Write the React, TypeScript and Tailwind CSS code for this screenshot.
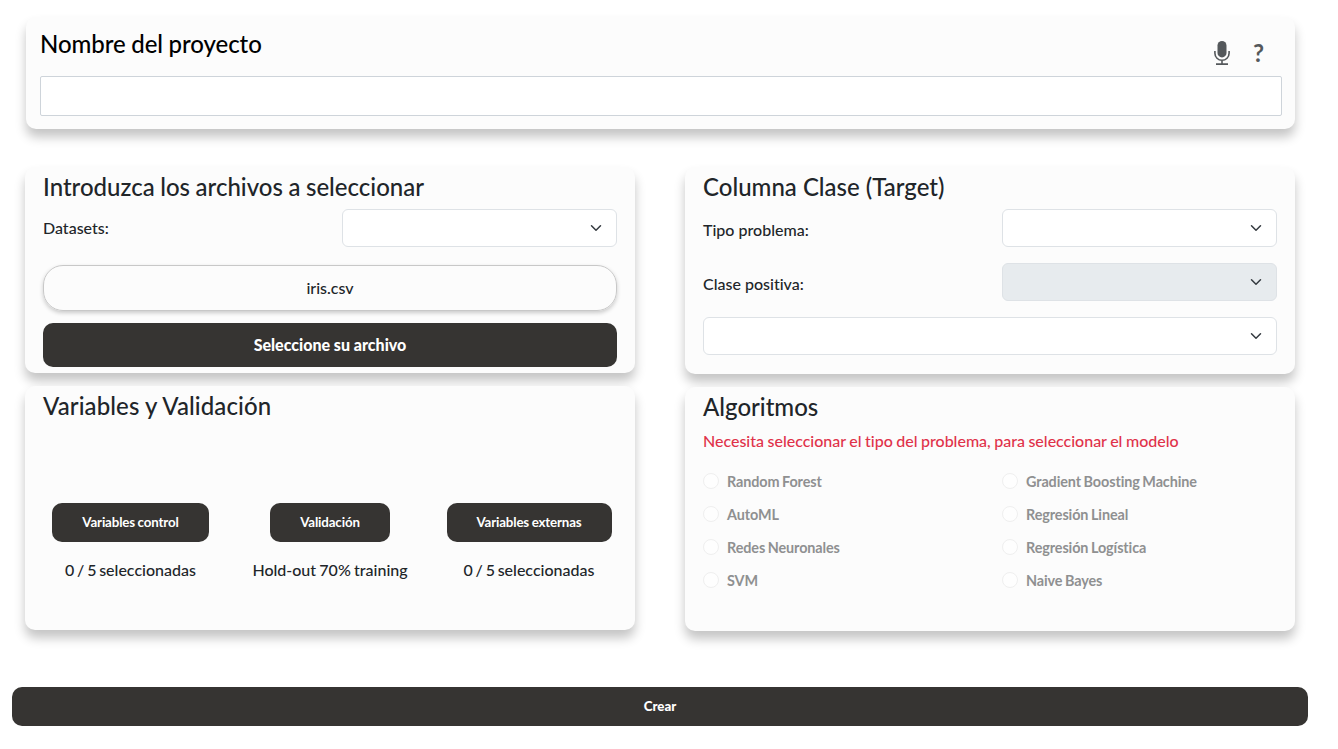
import React from "react";

const cardClass =
  "rounded-[10px] bg-[#fcfcfc] shadow-[0_8px_11px_rgba(0,0,0,0.23)]";
const titleClass = "text-[24px] leading-[29px] font-medium";
const darkButton =
  "flex items-center justify-center rounded-[10px] bg-[#363432] text-white";

function Select({ className = "", disabled = false }: { className?: string; disabled?: boolean }) {
  return (
    <button
      type="button"
      disabled={disabled}
      className={`flex h-[38px] items-center justify-end rounded-md border border-[#dee2e6] pr-3 ${
        disabled ? "bg-[#e7ebee]" : "bg-white"
      } ${className}`}
    >
      <svg width="16" height="12" viewBox="0 0 16 16" className="block" fill="none">
        <path
          d="m2 5 6 6 6-6"
          stroke="#343a40"
          strokeWidth="2"
          strokeLinecap="round"
          strokeLinejoin="round"
        />
      </svg>
    </button>
  );
}

function MicIcon() {
  return (
    <svg width="16" height="24" viewBox="0 0 16 24" className="block">
      <rect x="3.5" y="0" width="9" height="16.4" rx="4.5" fill="#54585b" />
      <path
        d="M.9 10v2.2a7.1 7.1 0 0 0 14.2 0V10M8 19.3v3.9M2 23.1h12"
        fill="none"
        stroke="#54585b"
        strokeWidth="1.6"
      />
    </svg>
  );
}

function Variable({ label, detail, className, labelClass, detailClass }: { label: string; detail: string; className: string; labelClass: string; detailClass: string }) {
  return (
    <div className={`flex flex-col items-center ${className}`}>
      <button type="button" className={`${darkButton} h-[39px] text-[13.33px] font-bold tracking-[-0.15px] [word-spacing:-0.5px] ${labelClass}`}>
        {label}
      </button>
      <p className={`mt-4 text-[16px] leading-6 whitespace-nowrap ${detailClass}`}>{detail}</p>
    </div>
  );
}

function Algorithm({ name }: { name: string }) {
  return (
    <label className="flex h-[33px] items-center">
      <span className="mb-px size-4 rounded-full border border-[#efefef] bg-[#fefefe]" />
      <span className="ml-2 text-[14.4px] leading-6 font-bold tracking-[-0.1px] text-[#8f9091] [word-spacing:-0.8px]">{name}</span>
    </label>
  );
}

export default function App() {
  return (
    <main className="flex h-[749px] w-[1338px] flex-col bg-white font-[Lato,sans-serif] font-medium text-[#212529] [font-variant-ligatures:none]">
      <section className={`${cardClass} mt-[17px] ml-[26px] h-[112px] w-[1269px] px-[14px] pt-[12px]`}>
        <div className="flex h-[47px] justify-between">
          <h1 className={`${titleClass} tracking-[-0.04px] text-black [word-spacing:-0.6px]`}>Nombre del proyecto</h1>
          <div className="mt-3 mr-[17px] flex">
            <MicIcon />
            <span className="ml-[23px] text-[24px] leading-6 font-bold text-[#54585b]">?</span>
          </div>
        </div>
        <input className="block h-10 w-[1242px] rounded-[2px] border border-[#ced4da] bg-white" />
      </section>

      <div className="mt-[38px] ml-[25px] flex gap-[50px]">
        <div className="flex w-[610px] flex-col gap-[13px]">
          <section className={`${cardClass} h-[206px] px-[18px] pt-[5px]`}>
            <h2 className={`${titleClass} [word-spacing:-0.5px]`}>Introduzca los archivos a seleccionar</h2>
            <div className="mt-2 flex items-center justify-between">
              <span className="text-[16px]">Datasets:</span>
              <Select className="w-[275px]" />
            </div>
            <div className="mt-[18px] flex h-[46px] items-center justify-center rounded-[20px] border border-[#c8c8c8] text-[16px] shadow-[0_2px_4px_rgba(0,0,0,0.2)]">
              iris.csv
            </div>
            <button type="button" className={`${darkButton} mt-3 h-11 w-full text-[16px] font-black`}>
              Seleccione su archivo
            </button>
          </section>
          <section className={`${cardClass} h-[244px] pt-[5px]`}>
            <h2 className={`${titleClass} pl-[18px] tracking-[0.1px]`}>Variables y Validación</h2>
            <div className="mt-[83px] flex">
              <Variable label="Variables control" detail="0 / 5 seleccionadas" className="ml-[18px] w-[175px]" labelClass="w-[157px]" detailClass="[word-spacing:-1.3px]" />
              <Variable label="Validación" detail="Hold-out 70% training" className="w-[224px]" labelClass="w-[120px]" detailClass="[word-spacing:-0.8px]" />
              <Variable label="Variables externas" detail="0 / 5 seleccionadas" className="w-[174px]" labelClass="w-[165px]" detailClass="[word-spacing:-1.3px]" />
            </div>
          </section>
        </div>

        <div className="flex w-[610px] flex-col gap-[13px]">
          <section className={`${cardClass} h-[207px] px-[18px] pt-[5px]`}>
            <h2 className={titleClass}>Columna Clase (Target)</h2>
            <div className="mt-2 flex justify-between">
              <span className="mt-[9px] text-[16px]">Tipo problema:</span>
              <Select className="w-[275px]" />
            </div>
            <div className="mt-4 flex justify-between">
              <span className="mt-[9px] text-[16px]">Clase positiva:</span>
              <Select className="w-[275px]" disabled />
            </div>
            <Select className="mt-4 w-full" />
          </section>
          <section className={`${cardClass} h-[244px] px-[18px] pt-[5px]`}>
            <h2 className={titleClass}>Algoritmos</h2>
            <p className="mt-2 text-[16px] leading-6 tracking-[-0.015px] text-[#e0324a] [word-spacing:-0.5px]">
              Necesita seleccionar el tipo del problema, para seleccionar el modelo
            </p>
            <div className="mt-3 flex">
              <div className="w-[299px]">
                <Algorithm name="Random Forest" />
                <Algorithm name="AutoML" />
                <Algorithm name="Redes Neuronales" />
                <Algorithm name="SVM" />
              </div>
              <div>
                <Algorithm name="Gradient Boosting Machine" />
                <Algorithm name="Regresión Lineal" />
                <Algorithm name="Regresión Logística" />
                <Algorithm name="Naive Bayes" />
              </div>
            </div>
          </section>
        </div>
      </div>

      <button type="button" className={`${darkButton} mt-[56px] ml-3 h-[39px] w-[1296px] text-[13.33px] font-black`}>
        Crear
      </button>
    </main>
  );
}
